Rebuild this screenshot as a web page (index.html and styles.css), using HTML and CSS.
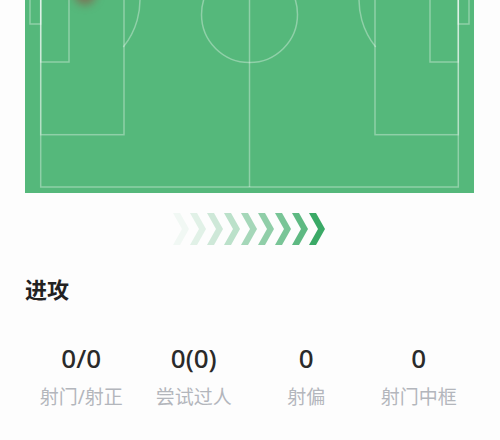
FILE: index.html
```html
<!DOCTYPE html>
<html lang="zh-CN">
<head>
    <meta charset="UTF-8">
    <meta name="viewport" content="width=device-width, initial-scale=1.0">
    <title>进攻数据</title>
    <link rel="stylesheet" href="styles.css">
</head>
<body>
    <div class="pitch">
        <svg class="pitch-lines" width="449" height="193" viewBox="0 0 449 193">
            <circle class="marker" cx="60" cy="-6" r="11"/>
            <g class="lines">
                <rect x="15.7" y="-10" width="417.6" height="197"/>
                <line x1="224.5" y1="-10" x2="224.5" y2="187"/>
                <circle cx="224.5" cy="14.5" r="48"/>
                <g>
                    <rect x="15.7" y="-10" width="83.3" height="144.7"/>
                    <rect x="15.7" y="-10" width="28.3" height="72"/>
                    <rect x="5" y="-10" width="10.7" height="34"/>
                    <path d="M98.3 47 A74.5 74.5 0 0 0 114.3 -10"/>
                </g>
                <g transform="translate(449 0) scale(-1 1)">
                    <rect x="15.7" y="-10" width="83.3" height="144.7"/>
                    <rect x="15.7" y="-10" width="28.3" height="72"/>
                    <rect x="5" y="-10" width="10.7" height="34"/>
                    <path d="M98.3 47 A74.5 74.5 0 0 0 114.3 -10"/>
                </g>
            </g>
        </svg>
    </div>

    <div class="direction">
        <svg width="156" height="32" viewBox="0 0 156 32">
            <polygon points="0,0 7,0 16,16 7,32 0,32 9,16" fill="#3aa966" opacity="0.06"/>
            <polygon points="17,0 24,0 33,16 24,32 17,32 26,16" fill="#3aa966" opacity="0.14"/>
            <polygon points="34,0 41,0 50,16 41,32 34,32 43,16" fill="#3aa966" opacity="0.24"/>
            <polygon points="51,0 58,0 67,16 58,32 51,32 60,16" fill="#3aa966" opacity="0.34"/>
            <polygon points="68,0 75,0 84,16 75,32 68,32 77,16" fill="#3aa966" opacity="0.45"/>
            <polygon points="85,0 92,0 101,16 92,32 85,32 94,16" fill="#3aa966" opacity="0.56"/>
            <polygon points="102,0 109,0 118,16 109,32 102,32 111,16" fill="#3aa966" opacity="0.68"/>
            <polygon points="119,0 126,0 135,16 126,32 119,32 128,16" fill="#3aa966" opacity="0.82"/>
            <polygon points="136,0 143,0 152,16 143,32 136,32 145,16" fill="#3aa966"/>
        </svg>
    </div>

    <div class="section">
        <h3 class="section-title">进攻</h3>
        <div class="stats">
            <div class="stat">
                <div class="stat-value">0/0</div>
                <div class="stat-label">射门/射正</div>
            </div>
            <div class="stat">
                <div class="stat-value">0(0)</div>
                <div class="stat-label">尝试过人</div>
            </div>
            <div class="stat">
                <div class="stat-value">0</div>
                <div class="stat-label">射偏</div>
            </div>
            <div class="stat">
                <div class="stat-value">0</div>
                <div class="stat-label">射门中框</div>
            </div>
        </div>
    </div>
</body>
</html>
```

FILE: styles.css
```css
body {
    margin: 0;
    background: #fdfdfd;
    font-family: "Noto Sans", "Noto Sans CJK SC", sans-serif;
    color: #222;
}
.pitch {
    margin: 0 26px 0 25px;
    height: 193px;
    background: #55b87b;
    overflow: hidden;
}
.pitch-lines {
    display: block;
}
.lines {
    fill: none;
    stroke: rgba(255, 255, 255, 0.34);
    stroke-width: 1.5;
}
.marker {
    fill: rgba(150, 70, 60, 0.55);
    filter: blur(4px);
}
.direction {
    display: flex;
    justify-content: center;
    margin-top: 20px;
    padding-left: 2px;
}
.direction svg {
    display: block;
}
.section {
    padding: 0 25px;
}
.section-title {
    margin: 29px 0 0;
    font-size: 22px;
    line-height: 30px;
    font-weight: 700;
}
.stats {
    display: grid;
    grid-template-columns: repeat(4, 1fr);
    margin-top: 38px;
    text-align: center;
}
.stat-value {
    font-size: 26px;
    line-height: 32px;
    font-weight: 500;
    color: #2a2a2a;
}
.stat-label {
    margin-top: 11px;
    font-size: 19px;
    line-height: 24px;
    color: #b3b6bc;
}
```
